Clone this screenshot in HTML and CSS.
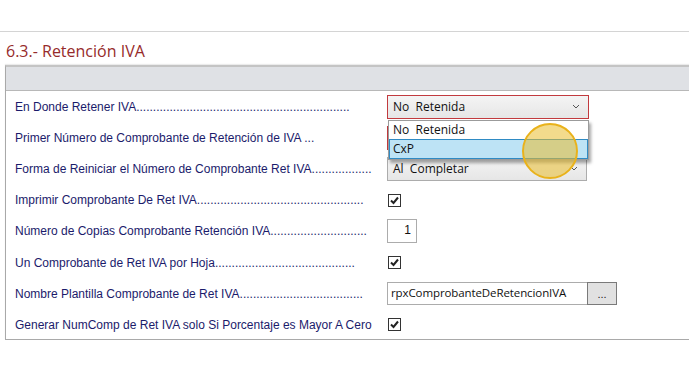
FILE: index.html
```html
<!DOCTYPE html>
<html lang="es">
<head>
<meta charset="utf-8">
<link rel="stylesheet" href="styles.css">
</head>
<body>
<div class="page">
  <div class="top-space"></div>
  <h1 class="title">6.3.- Retención IVA</h1>
  <div class="panel">
    <div class="panel-head"></div>
    <div class="rows">
      <div class="row">
        <span class="label">En Donde Retener IVA................................................................</span>
        <div class="ctl">
          <div class="combo combo-active"><span>No&nbsp; Retenida</span><svg class="chev" width="8" height="5" viewBox="0 0 8 5"><path d="M1 1 L4 4 L7 1" fill="none" stroke="#555" stroke-width="1"/></svg></div>
          <div class="dropdown">
            <div class="opt">No&nbsp; Retenida</div>
            <div class="opt sel">CxP</div>
          </div>
          <div class="pointer"></div>
        </div>
      </div>
      <div class="row">
        <span class="label">Primer Número de Comprobante de Retención de IVA ...</span>
        <div class="ctl"><div class="field field-red"></div></div>
      </div>
      <div class="row">
        <span class="label">Forma de Reiniciar el Número de Comprobante Ret IVA..................</span>
        <div class="ctl"><div class="combo combo-plain"><span>Al&nbsp; Completar</span><svg class="chev" width="8" height="5" viewBox="0 0 8 5"><path d="M1 1 L4 4 L7 1" fill="none" stroke="#555" stroke-width="1"/></svg></div></div>
      </div>
      <div class="row">
        <span class="label">Imprimir Comprobante De Ret IVA..................................................</span>
        <div class="ctl"><span class="check"><svg width="11" height="11" viewBox="0 0 11 11"><path d="M2 5.5 L4.5 8 L9 2.5" fill="none" stroke="#222" stroke-width="2"/></svg></span></div>
      </div>
      <div class="row">
        <span class="label">Número de Copias Comprobante Retención IVA.............................</span>
        <div class="ctl"><div class="num">1</div></div>
      </div>
      <div class="row">
        <span class="label">Un Comprobante de Ret IVA por Hoja..........................................</span>
        <div class="ctl"><span class="check"><svg width="11" height="11" viewBox="0 0 11 11"><path d="M2 5.5 L4.5 8 L9 2.5" fill="none" stroke="#222" stroke-width="2"/></svg></span></div>
      </div>
      <div class="row">
        <span class="label">Nombre Plantilla Comprobante de Ret IVA.....................................</span>
        <div class="ctl"><div class="text-wrap"><div class="text">rpxComprobanteDeRetencionIVA</div><div class="btn">...</div></div></div>
      </div>
      <div class="row">
        <span class="label">Generar NumComp de Ret IVA solo Si Porcentaje es Mayor A Cero</span>
        <div class="ctl"><span class="check"><svg width="11" height="11" viewBox="0 0 11 11"><path d="M2 5.5 L4.5 8 L9 2.5" fill="none" stroke="#222" stroke-width="2"/></svg></span></div>
      </div>
    </div>
  </div>
</div>
</body>
</html>
```
FILE: styles.css
```css
html, body {
  margin: 0;
  padding: 0;
  background: #ffffff;
  overflow: hidden;
}
.page {
  width: 689px;
  height: 385px;
  overflow: hidden;
}
.top-space {
  height: 31px;
  border-bottom: 1px solid #d4d4d4;
}
.title {
  margin: 0;
  padding: 9px 0 0 6px;
  height: 24px;
  font-family: "Open Sans", "Noto Sans", sans-serif;
  font-weight: 400;
  font-size: 16px;
  line-height: 20px;
  color: #962b2b;
}
.panel {
  margin-left: 5px;
  margin-right: -20px;
  border: 1px solid #a9a9a9;
  border-top: 2px solid #c4c4c4;
  height: 272px;
  box-shadow: 0 -1px 1px rgba(0,0,0,0.08);
}
.panel-head {
  height: 23px;
  background: #dfe1e5;
  border-bottom: 1px solid #b8b8b8;
}
.rows {
  display: flex;
  flex-direction: column;
}
.row {
  height: 31.2px;
  display: grid;
  grid-template-columns: 372px 1fr;
  align-items: center;
  padding-left: 9px;
}
.label {
  font-family: "Liberation Sans", Arial, sans-serif;
  font-size: 12px;
  color: #1b1b6b;
  white-space: nowrap;
  overflow: hidden;
}
.ctl {
  position: relative;
  height: 24px;
  display: flex;
  align-items: center;
}
.combo {
  box-sizing: border-box;
  height: 24px;
  display: flex;
  align-items: center;
  justify-content: space-between;
  padding: 0 8px 0 5px;
  font-family: "Open Sans", "Noto Sans", sans-serif;
  font-size: 12px;
  color: #111;
  background: linear-gradient(#f4f4f4, #e6e6e6);
}
.combo-active {
  width: 202px;
  border: 1px solid #c23a3e;
}
.combo-plain {
  width: 200px;
  border: 1px solid #acacac;
}
.chev {
  display: block;
}
.dropdown {
  position: absolute;
  left: 1px;
  top: 25px;
  width: 201px;
  box-sizing: border-box;
  background: #fff;
  border: 1px solid #9b9b9b;
  box-shadow: 2px 3px 3px rgba(0,0,0,0.35);
  font-family: "Open Sans", "Noto Sans", sans-serif;
  font-size: 12px;
  color: #111;
  z-index: 5;
}
.opt {
  height: 18px;
  line-height: 18px;
  padding-left: 4px;
}
.opt.sel {
  background: #bde3f5;
  border: 1px solid #2f8bc4;
  height: 18px;
  line-height: 18px;
  padding-left: 3px;
}
.pointer {
  position: absolute;
  left: 135px;
  top: 28px;
  width: 52px;
  height: 52px;
  border-radius: 50%;
  border: 2px solid #e9b21b;
  background: rgba(233, 190, 45, 0.55);
  z-index: 6;
}
.field {
  box-sizing: border-box;
  width: 200px;
  height: 24px;
  background: #fff;
}
.field-red {
  border: 1px solid #c23a3e;
}
.check {
  box-sizing: border-box;
  width: 13px;
  height: 13px;
  border: 1px solid #333;
  background: #fff;
  display: flex;
  align-items: center;
  justify-content: center;
  margin-left: 1px;
}
.check svg {
  display: block;
}
.num {
  box-sizing: border-box;
  width: 30px;
  height: 24px;
  border: 1px solid #acacac;
  background: #fff;
  font-family: "Liberation Sans", Arial, sans-serif;
  font-size: 12px;
  text-align: right;
  padding: 3px 5px 0 0;
  color: #111;
}
.text-wrap {
  display: flex;
  height: 23px;
}
.text {
  box-sizing: border-box;
  width: 200px;
  height: 23px;
  border: 1px solid #acacac;
  border-right: none;
  padding: 2px 0 0 3px;
  font-family: "Open Sans", "Noto Sans", sans-serif;
  font-size: 11.5px;
  color: #111;
  letter-spacing: -0.1px;
}
.btn {
  box-sizing: border-box;
  width: 30px;
  height: 23px;
  border: 1px solid #7a7a7a;
  background: #e1e1e1;
  font-family: "Liberation Sans", Arial, sans-serif;
  font-size: 11px;
  text-align: center;
  line-height: 23px;
  color: #222;
}
```
